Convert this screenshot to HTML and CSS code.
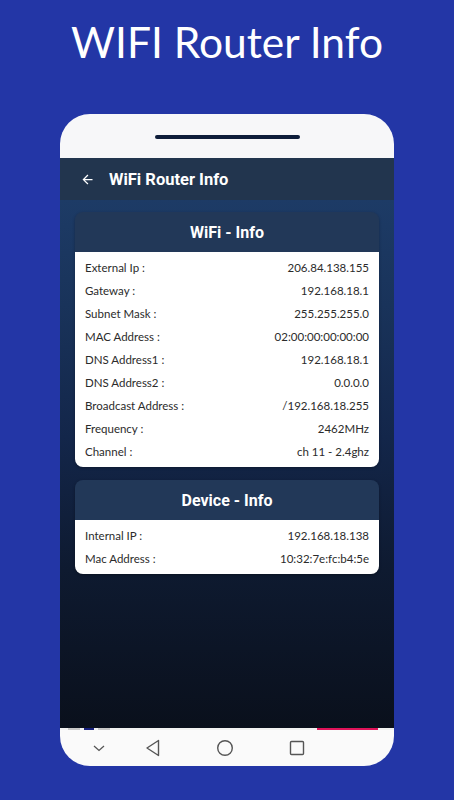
FILE: index.html
```html
<!DOCTYPE html>
<html lang="en">
<head>
    <meta charset="UTF-8">
    <meta name="viewport" content="width=device-width, initial-scale=1.0">
    <title>WIFI Router Info</title>
    <link rel="stylesheet" href="styles.css">
</head>
<body>
    <h1 class="promo-title">WIFI Router Info</h1>

    <div class="phone">
        <div class="bezel-top">
            <div class="speaker"></div>
        </div>

        <div class="app-bar">
            <svg class="back-arrow" width="15" height="15" viewBox="0 0 24 24">
                <path d="M20 11H7.83l5.59-5.59L12 4l-8 8 8 8 1.41-1.41L7.83 13H20v-2z" fill="#fff"/>
            </svg>
            <span class="app-title">WiFi Router Info</span>
        </div>

        <div class="screen">
            <div class="card">
                <div class="card-header">WiFi - Info</div>
                <div class="card-body">
                    <div class="row"><span>External Ip :</span><span>206.84.138.155</span></div>
                    <div class="row"><span>Gateway :</span><span>192.168.18.1</span></div>
                    <div class="row"><span>Subnet Mask :</span><span>255.255.255.0</span></div>
                    <div class="row"><span>MAC Address :</span><span>02:00:00:00:00:00</span></div>
                    <div class="row"><span>DNS Address1 :</span><span>192.168.18.1</span></div>
                    <div class="row"><span>DNS Address2 :</span><span>0.0.0.0</span></div>
                    <div class="row"><span>Broadcast Address :</span><span>/192.168.18.255</span></div>
                    <div class="row"><span>Frequency :</span><span>2462MHz</span></div>
                    <div class="row"><span>Channel :</span><span>ch 11 - 2.4ghz</span></div>
                </div>
            </div>

            <div class="card">
                <div class="card-header">Device - Info</div>
                <div class="card-body">
                    <div class="row"><span>Internal IP :</span><span>192.168.18.138</span></div>
                    <div class="row"><span>Mac Address :</span><span>10:32:7e:fc:b4:5e</span></div>
                </div>
            </div>
        </div>

        <div class="ad-strip">
            <span class="ad-bit grey"></span>
            <span class="ad-bit navy"></span>
            <span class="ad-bit grey"></span>
            <span class="ad-bit pink"></span>
        </div>

        <div class="nav-bar">
            <svg class="nav-icon chevron" width="24" height="24" viewBox="0 0 24 24">
                <path d="M7 10l5 4.5 5-4.5" fill="none" stroke="#555" stroke-width="1.3"/>
            </svg>
            <svg class="nav-icon" width="24" height="24" viewBox="0 0 24 24">
                <path d="M17.5 4.5v15L6 12z" fill="none" stroke="#555" stroke-width="1.4" stroke-linejoin="round"/>
            </svg>
            <svg class="nav-icon" width="24" height="24" viewBox="0 0 24 24">
                <circle cx="12" cy="12" r="7.3" fill="none" stroke="#555" stroke-width="1.4"/>
            </svg>
            <svg class="nav-icon" width="24" height="24" viewBox="0 0 24 24">
                <rect x="5.5" y="5.5" width="13" height="13" rx="1" fill="none" stroke="#555" stroke-width="1.4"/>
            </svg>
        </div>
    </div>
</body>
</html>
```

FILE: styles.css
```css
body {
    margin: 0;
    background-color: #2336a6;
    font-family: "Lato", "Noto Sans", sans-serif;
}
.promo-title {
    margin: 0;
    padding-top: 12px;
    text-align: center;
    color: #fff;
    font-family: "Lato", "Noto Sans", sans-serif;
    font-weight: 400;
    font-size: 42.5px;
    line-height: 60px;
}
.phone {
    width: 334px;
    margin: 42px auto 0;
}
.bezel-top {
    height: 44px;
    background: #f7f7f9;
    border-radius: 30px 30px 0 0;
    display: flex;
    justify-content: center;
}
.speaker {
    width: 145px;
    height: 4px;
    margin-top: 21px;
    border-radius: 2px;
    background: #0e1d3a;
}
.app-bar {
    height: 42px;
    background: #22354e;
    display: flex;
    align-items: center;
    padding-left: 20px;
    gap: 14px;
}
.app-title {
    color: #fff;
    font-family: "Roboto", sans-serif;
    font-weight: 700;
    font-size: 16.5px;
}
.screen {
    height: 504px;
    padding: 12px 15px;
    background: linear-gradient(#1d3b66 0%, #19335a 20%, #13264a 45%, #0e1a30 70%, #0a101c 100%);
    display: flex;
    flex-direction: column;
    gap: 13px;
}
.card {
    border-radius: 8px;
    overflow: hidden;
    box-shadow: 0 1px 3px rgba(0,0,0,0.3);
}
.card-header {
    height: 40px;
    background: #223858;
    color: #fff;
    font-family: "Roboto", sans-serif;
    font-weight: 700;
    font-size: 16px;
    display: flex;
    align-items: center;
    justify-content: center;
}
.card-body {
    background: #fff;
    padding: 4px 10px;
}
.row {
    display: flex;
    justify-content: space-between;
    height: 23px;
    line-height: 23px;
    font-size: 11.5px;
    color: #2b2b2b;
}
.ad-strip {
    height: 2px;
    background: #f2f2f2;
    display: flex;
    gap: 4px;
    padding-left: 8px;
}
.ad-bit { height: 2px; display: block; }
.ad-bit.grey { width: 12px; background: #c8c8c8; }
.ad-bit.navy { width: 10px; background: #1a237e; }
.ad-bit.pink { width: 61px; margin-left: 203px; background: #e0145a; }
.nav-bar {
    height: 36px;
    background: #fafafa;
    border-radius: 0 0 30px 30px;
    display: flex;
    align-items: center;
    padding-left: 27px;
    gap: 48px;
}
.nav-icon { display: block; }
.chevron { margin-right: -18px; }
```
